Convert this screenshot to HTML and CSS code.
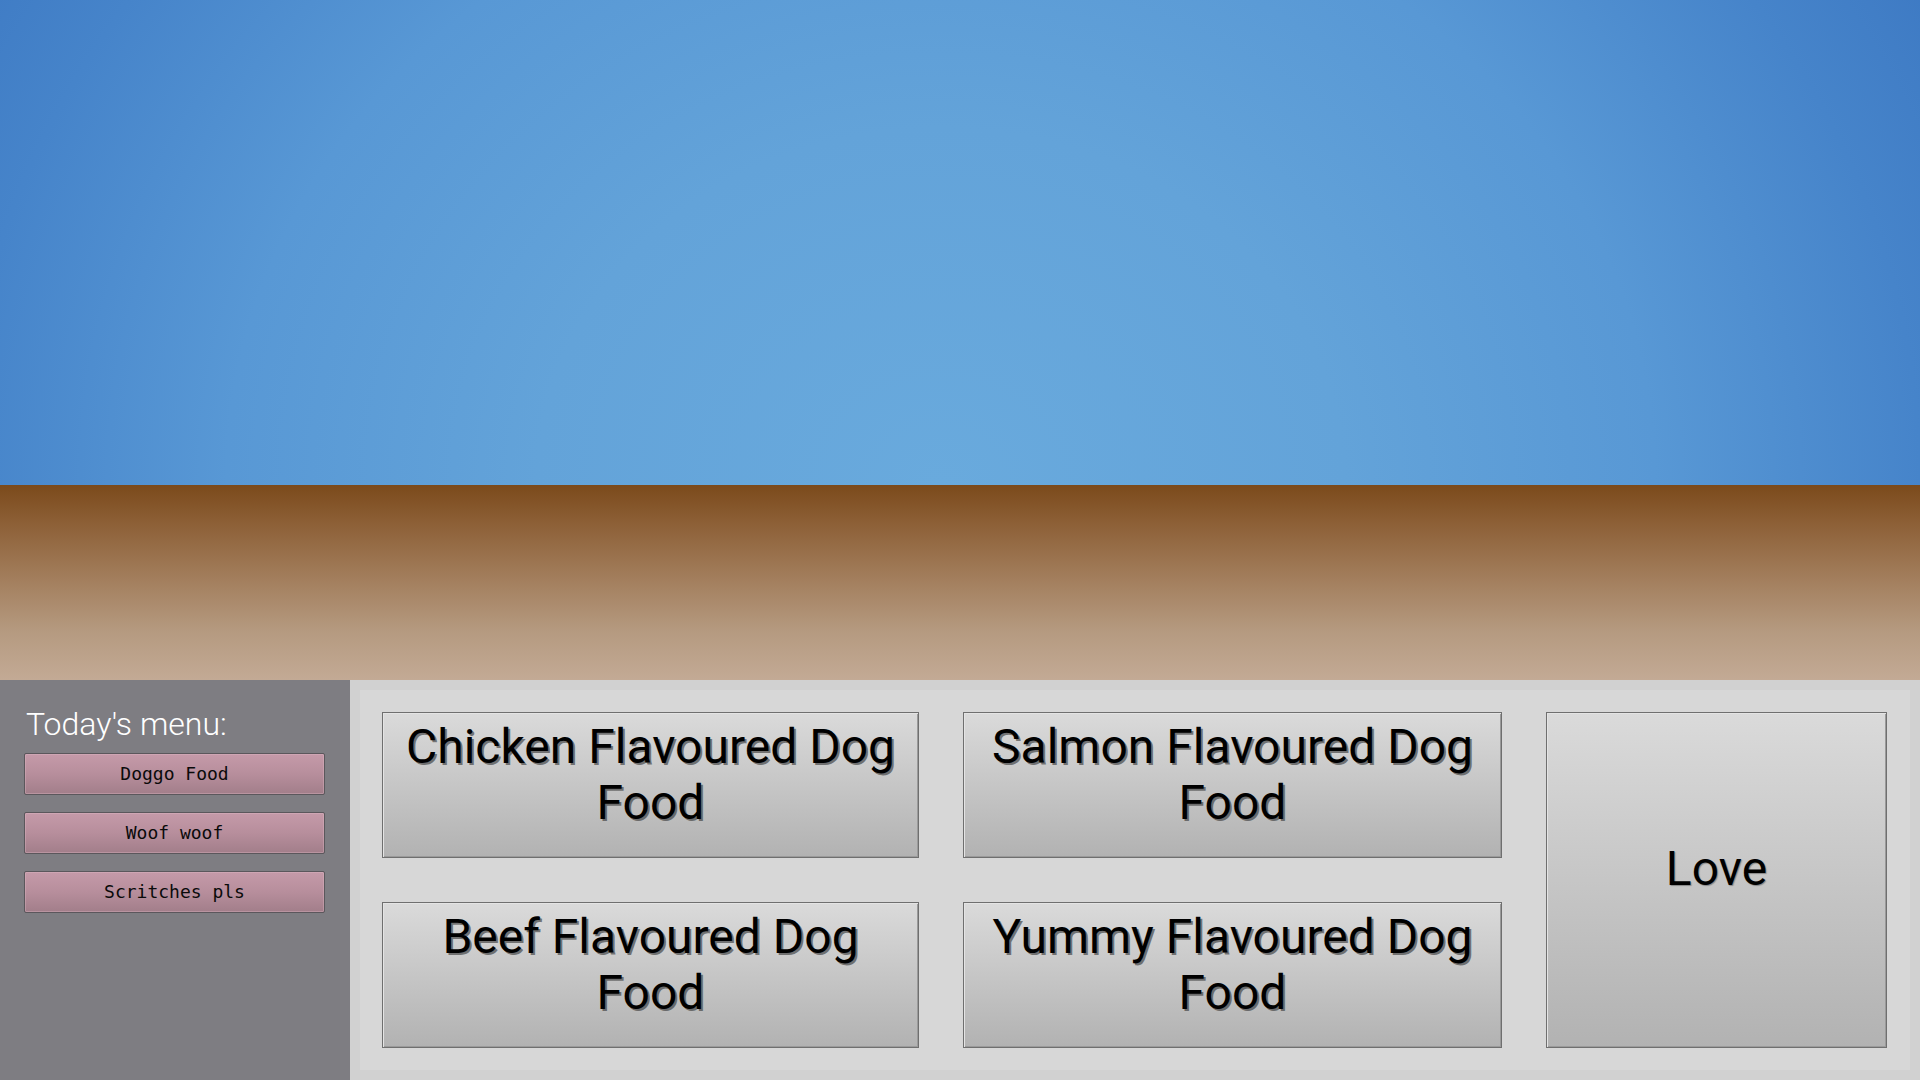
FILE: index.html
```
<!DOCTYPE html>
<html lang="en">
<head>
<meta charset="utf-8">
<title>Today's menu</title>
<link rel="stylesheet" href="styles.css">
</head>
<body>
<div class="screen">
  <div class="sky"></div>
  <div class="ground"></div>
  <div class="bottom">
    <aside class="sidebar">
      <div class="title">Today's menu:</div>
      <div class="menu">
        <div class="menu-btn">Doggo Food</div>
        <div class="menu-btn">Woof woof</div>
        <div class="menu-btn">Scritches pls</div>
      </div>
    </aside>
    <main class="main">
      <div class="inner">
        <div class="btn">Chicken Flavoured Dog<br>Food</div>
        <div class="btn">Salmon Flavoured Dog<br>Food</div>
        <div class="btn love">Love</div>
        <div class="btn">Beef Flavoured Dog<br>Food</div>
        <div class="btn">Yummy Flavoured Dog<br>Food</div>
      </div>
    </main>
  </div>
</div>
</body>
</html>
```

FILE: styles.css
```
html, body {
  margin: 0;
  padding: 0;
}
body {
  width: 1920px;
  height: 1080px;
  overflow: hidden;
  font-family: Roboto, "Liberation Sans", sans-serif;
}
.screen {
  display: flex;
  flex-direction: column;
  width: 1920px;
  height: 1080px;
}
.sky {
  height: 485px;
  background:
    radial-gradient(ellipse 60% 210% at 49% 100%, #69aadd 0%, #63a3d9 35%, #5898d5 62%, #4684ca 85%, #3d79c3 100%);
}
.ground {
  height: 195px;
  background: linear-gradient(to bottom, #7b4a1b 0%, #8d6037 20%, #a4805f 50%, #b59a80 75%, #c3aa95 100%);
}
.bottom {
  height: 400px;
  display: flex;
}
.sidebar {
  width: 350px;
  box-sizing: border-box;
  background: #7e7d82;
  padding: 25px 25px 0 24px;
}
.title {
  font-weight: 300;
  font-size: 32px;
  line-height: 38px;
  color: #ffffff;
  padding-left: 2px;
}
.menu {
  margin-top: 10px;
  display: flex;
  flex-direction: column;
  gap: 17px;
}
.menu-btn {
  height: 42px;
  box-sizing: border-box;
  border: 1px solid #5b575c;
  border-radius: 2px;
  box-shadow: inset 0 0 0 1px rgba(225, 190, 200, 0.35);
  background: linear-gradient(to bottom, #c59aa9 0%, #b78e9c 50%, #a27e8a 100%);
  display: flex;
  align-items: center;
  justify-content: center;
  font-family: "DejaVu Sans Mono", "Liberation Mono", monospace;
  font-size: 18px;
  color: #0a0a0a;
  padding-bottom: 2px;
}
.main {
  flex: 1;
  background: #d1d1d1;
  padding: 10px;
}
.inner {
  height: 100%;
  box-sizing: border-box;
  background: #d7d7d7;
  padding: 22px 23px 23px 22px;
  display: grid;
  grid-template-columns: 537px 539px 1fr;
  grid-template-rows: 146px 146px;
  column-gap: 44px;
  row-gap: 44px;
}
.btn {
  box-sizing: border-box;
  border: 1px solid #6f6f6f;
  box-shadow: inset 1px 1px 0 #e4e4e4, inset -1px -1px 0 #9a9a9a;
  background: linear-gradient(to bottom, #dadada 0%, #c6c6c6 50%, #b2b2b2 100%);
  display: flex;
  align-items: center;
  justify-content: center;
  text-align: center;
  font-family: Roboto, "Liberation Sans", sans-serif;
  font-size: 48px;
  line-height: 56px;
  color: #000;
  text-shadow: 2px 2px 0.5px rgba(50, 50, 50, 0.6);
  padding-bottom: 20px;
}
.love {
  grid-column: 3;
  grid-row: 1 / span 2;
  text-shadow: 1px 1px 1px rgba(40, 40, 40, 0.4);
  padding-bottom: 22px;
}
```
